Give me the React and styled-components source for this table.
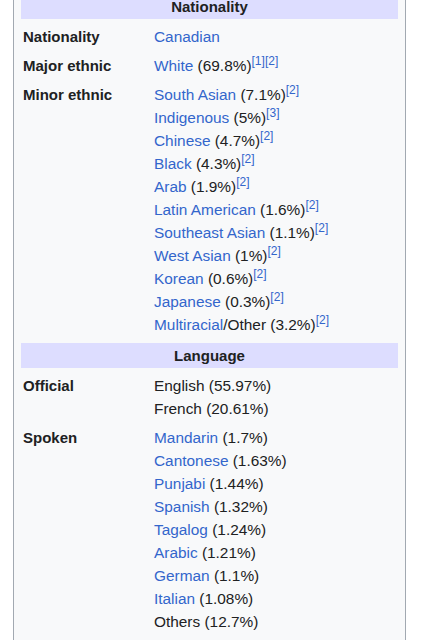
import React from "react";
import styled, { createGlobalStyle } from "styled-components";

const Global = createGlobalStyle`
  html, body { margin: 0; padding: 0; background: #ffffff; }
  body { font-family: "Liberation Sans", Arial, sans-serif; color: #202122; }
`;

const Box = styled.div`
  box-sizing: border-box;
  width: 393px;
  margin: -11px 0 0 13px;
  padding: 0 7px 20px;
  background: #f8f9fa;
  border: 1px solid #a2a9b1;
  display: grid;
  grid-template-columns: 133px 1fr;
  font-size: 15px;
  line-height: 23px;
`;

const Header = styled.div`
  grid-column: 1 / -1;
  margin: 4px 0 3px;
  height: 25px;
  line-height: 26px;
  background: #ddddff;
  text-align: center;
  font-weight: bold;
  color: #202122;
`;

const Label = styled.div`
  padding: 3px 0 3px 2px;
  font-weight: bold;
  color: #202122;
`;

const Value = styled.div`
  padding: 3px 0;
  display: flex;
  flex-direction: column;
  font-size: 15.4px;
`;

const Line = styled.div`
  white-space: nowrap;
  height: 23px;
`;

const Link = styled.a`
  color: #3366cc;
  text-decoration: none;
`;

const Ref = styled.sup`
  font-size: 12px;
  line-height: 1;
  vertical-align: 6px;
  color: #3366cc;
`;

const nationality = [
  { label: "Nationality", items: [{ link: "Canadian" }] },
  { label: "Major ethnic", items: [{ link: "White", text: " (69.8%)", refs: ["1", "2"] }] },
  {
    label: "Minor ethnic",
    items: [
      { link: "South Asian", text: " (7.1%)", refs: ["2"] },
      { link: "Indigenous", text: " (5%)", refs: ["3"] },
      { link: "Chinese", text: " (4.7%)", refs: ["2"] },
      { link: "Black", text: " (4.3%)", refs: ["2"] },
      { link: "Arab", text: " (1.9%)", refs: ["2"] },
      { link: "Latin American", text: " (1.6%)", refs: ["2"] },
      { link: "Southeast Asian", text: " (1.1%)", refs: ["2"] },
      { link: "West Asian", text: " (1%)", refs: ["2"] },
      { link: "Korean", text: " (0.6%)", refs: ["2"] },
      { link: "Japanese", text: " (0.3%)", refs: ["2"] },
      { link: "Multiracial", text: "/Other (3.2%)", refs: ["2"] },
    ],
  },
];

const language = [
  {
    label: "Official",
    items: [{ text: "English (55.97%)" }, { text: "French (20.61%)" }],
  },
  {
    label: "Spoken",
    items: [
      { link: "Mandarin", text: " (1.7%)" },
      { link: "Cantonese", text: " (1.63%)" },
      { link: "Punjabi", text: " (1.44%)" },
      { link: "Spanish", text: " (1.32%)" },
      { link: "Tagalog", text: " (1.24%)" },
      { link: "Arabic", text: " (1.21%)" },
      { link: "German", text: " (1.1%)" },
      { link: "Italian", text: " (1.08%)" },
      { text: "Others (12.7%)" },
    ],
  },
];

function Rows({ rows }) {
  return rows.map((r) => (
    <React.Fragment key={r.label}>
      <Label>{r.label}</Label>
      <Value>
        {r.items.map((it, i) => (
          <Line key={i}>
            {it.link && <Link href="#">{it.link}</Link>}
            {it.text}
            {it.refs && it.refs.map((n) => <Ref key={n}>[{n}]</Ref>)}
          </Line>
        ))}
      </Value>
    </React.Fragment>
  ));
}

export default function App() {
  return (
    <>
      <Global />
      <Box>
        <Header>Nationality</Header>
        <Rows rows={nationality} />
        <Header>Language</Header>
        <Rows rows={language} />
      </Box>
    </>
  );
}
